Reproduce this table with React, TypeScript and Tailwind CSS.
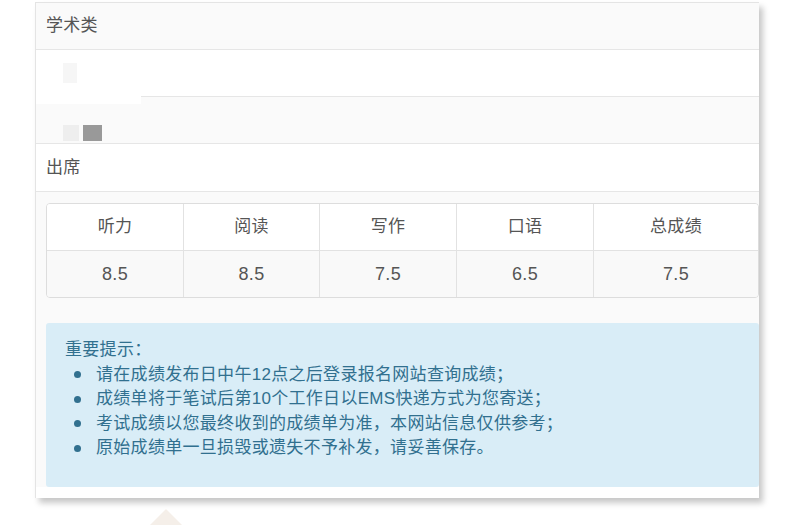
const scores = [
  { label: "听力", value: "8.5" },
  { label: "阅读", value: "8.5" },
  { label: "写作", value: "7.5" },
  { label: "口语", value: "6.5" },
  { label: "总成绩", value: "7.5" },
];

const tips = [
  "请在成绩发布日中午12点之后登录报名网站查询成绩；",
  "成绩单将于笔试后第10个工作日以EMS快递方式为您寄送；",
  "考试成绩以您最终收到的成绩单为准，本网站信息仅供参考；",
  "原始成绩单一旦损毁或遗失不予补发，请妥善保存。",
];

const App = () => {
  return (
    <div
      className="w-[790px] h-[525px] overflow-hidden bg-white text-[17px] tracking-[0.3px] text-[#555]"
      style={{ fontFamily: '"Liberation Sans", "Noto Sans CJK SC", sans-serif' }}
    >
      {/* Result card */}
      <div className="ml-[35px] mt-[2px] w-[724px] border-l border-t border-[#e4e4e4] bg-white shadow-[4px_5px_6px_rgba(0,0,0,0.22)]">
        <div className="h-[47px] flex items-center pl-[10px] bg-[#fafafa] border-b border-[#e6e6e6]">学术类</div>

        {/* blurred rows */}
        <div className="h-[47px] relative border-b border-[#e6e6e6]">
          <div className="absolute left-0 top-[8px] w-[105px] h-[46px] bg-white z-10" />
          <div className="absolute left-[27px] top-[13px] w-[14px] h-[20px] bg-[#f6f6f6] z-10" />
        </div>
        <div className="h-[47px] flex items-end gap-[4px] pl-[27px] pb-[2px] bg-[#fafafa] border-b border-[#e6e6e6]">
          <div className="w-[16px] h-[16px] bg-[#eeeeee]" />
          <div className="w-[19px] h-[16px] bg-[#999999]" />
        </div>

        <div className="h-[48px] flex items-center pl-[10px] border-b border-[#e6e6e6]">出席</div>

        {/* Scores */}
        <div className="bg-[#fafafa] pt-[11px] pl-[10px]">
          <div className="rounded-[4px] border border-[#dddddd] overflow-hidden">
            <div className="grid grid-cols-[137px_136px_137px_137px_1fr] bg-white h-[47px] border-b border-[#e2e2e2]">
              {scores.map((s, i) => (
                <div
                  key={s.label}
                  className={`flex items-center justify-center ${i < scores.length - 1 ? "border-r border-[#e2e2e2]" : ""}`}
                >
                  {s.label}
                </div>
              ))}
            </div>
            <div className="grid grid-cols-[137px_136px_137px_137px_1fr] bg-[#f9f9f9] h-[46px] text-[18px]">
              {scores.map((s, i) => (
                <div
                  key={s.label}
                  className={`flex items-center justify-center ${i < scores.length - 1 ? "border-r border-[#e2e2e2]" : ""}`}
                >
                  {s.value}
                </div>
              ))}
            </div>
          </div>

          {/* Notice */}
          <div className="mt-[25px] h-[164px] rounded-[3px] bg-[#d9edf7] text-[#31708f] pt-[15px] pl-[19px] leading-[24.5px]">
            <div>重要提示：</div>
            <ul>
              {tips.map((t) => (
                <li key={t} className="flex items-center">
                  <span className="w-[7px] h-[7px] rounded-full bg-[#31708f] ml-[9px] mr-[15px]" />
                  <span>{t}</span>
                </li>
              ))}
            </ul>
          </div>
          <div className="h-[11px] bg-white -ml-[10px]" />
        </div>
      </div>

      {/* faint watermark */}
      <div className="ml-[148px] mt-[11px]">
        <svg width="36" height="18" viewBox="0 0 36 18">
          <polygon points="18,0 36,18 0,18" fill="#f5efe9" />
        </svg>
      </div>
    </div>
  );
};

export default App;
